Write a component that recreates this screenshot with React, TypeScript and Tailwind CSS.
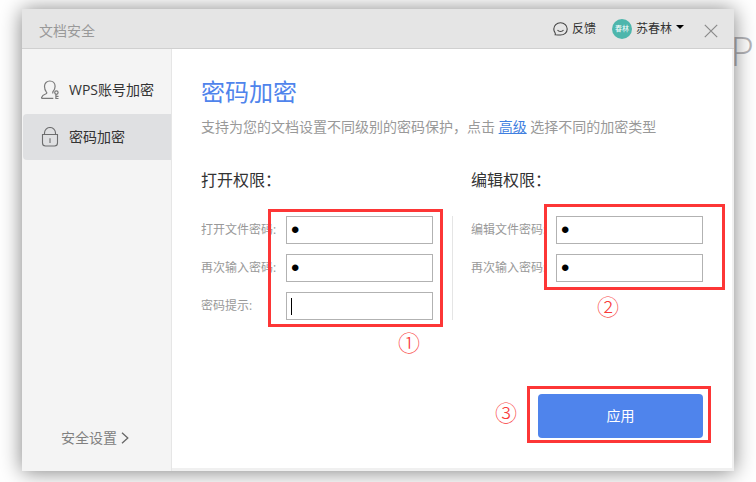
import React, { useState } from 'react';

type Field = {
  id: string;
  label: string;
  type: 'password' | 'text';
  initial: string;
  active?: boolean;
};

const openFields: Field[] = [
  { id: 'open-password', label: '打开文件密码:', type: 'password', initial: '1' },
  { id: 'open-repeat', label: '再次输入密码:', type: 'password', initial: '1' },
  { id: 'open-hint', label: '密码提示:', type: 'text', initial: '', active: true },
];

const editFields: Field[] = [
  { id: 'edit-password', label: '编辑文件密码:', type: 'password', initial: '1' },
  { id: 'edit-repeat', label: '再次输入密码:', type: 'password', initial: '1' },
];

function UserKeyIcon() {
  return (
    <svg width="18" height="20" viewBox="0 0 18 20" fill="none" stroke="#7a7a7a" strokeWidth="1.2">
      <path d="M12.300 18.400H1.500c-.7 0-1-.5-.8-1.100.5-1.900 1.800-2.700 3.900-3.300 1.300-.4 1.500-1.300.7-2.200C4.200 10.500 3.500 8.500 3.500 6.300 3.500 3.100 5.800 1 8.800 1s5.300 2.100 5.300 5.300c0 2-.7 3.600-1.800 4.900-.7.900-.7 1.500-.2 2.200" />
      <circle cx="15.400" cy="12.600" r="1.700" />
      <path d="M14.900 14.300v4.200h2.600M14.900 16.400h2.600" />
    </svg>
  );
}

function LockIcon() {
  return (
    <svg width="18" height="20" viewBox="0 0 18 20" fill="none" stroke="#6c6d6e" strokeWidth="1.1">
      <path d="M3.500 7.500V6a5.400 5.400 0 0 1 11 0v1.500" />
      <path d="M1.500 7.500h15v8.500a3 3 0 0 1-3 3h-9a3 3 0 0 1-3-3z" />
      <path d="M9 11.200v4.800" />
    </svg>
  );
}

function FeedbackIcon() {
  return (
    <svg width="15" height="14" viewBox="0 0 15 14" fill="none" stroke="#444" strokeWidth="1.1">
      <path d="M2.200 12.700c.3-.8.200-1.400-.2-2A5.900 5.900 0 0 1 .8 7C.8 3.500 3.700.8 7.500.8S14.200 3.500 14.200 7s-2.900 6-6.700 6c-1.800 0-3.400-.1-5.300-.3z" />
      <path d="M4.500 8c1.400 2 4.600 2 6 0" />
    </svg>
  );
}

function FieldRow({ field }: { field: Field }) {
  const [value, setValue] = useState(field.initial);

  return (
    <div className="flex items-center">
      <label htmlFor={field.id} className="w-[85px] shrink-0 text-xs text-[#999]">
        {field.label}
      </label>
      <div className="relative min-w-0 flex-1">
        <input
          id={field.id}
          type={field.type}
          value={value}
          onChange={(e) => setValue(e.target.value)}
          className="block h-7 w-full border border-[#b2b2b2] bg-white px-1 font-['Liberation_Sans'] text-2xl text-black outline-none"
        />
        {field.active && <span className="absolute top-1.5 left-[5px] h-[17px] w-px bg-black" />}
      </div>
    </div>
  );
}

function Mark({ className, children }: { className: string; children: string }) {
  return (
    <span className={`absolute text-[22px] leading-6 font-light text-[#f93a3a] ${className}`}>
      {children}
    </span>
  );
}

function App() {
  return (
    <div className="relative isolate flex min-h-screen overflow-hidden bg-white px-[22px] pt-[9px] pb-[11px] font-['Open_Sans','Noto_Sans_CJK_SC',sans-serif]">
      <p className="absolute top-[31px] right-0.5 -z-10 font-['Open_Sans'] text-[40px] leading-10 font-light text-[#b4b4b8]">
        P
      </p>

      <div className="flex min-w-0 flex-1 flex-col bg-white shadow-[0_1px_20px_rgba(0,0,0,0.5)]">
        <header className="flex h-10 items-center border-b border-[#d0d0d0] bg-[#e5e5e5] pr-4 pl-[17px]">
          <h1 className="mt-1 flex-1 text-sm text-[#999]">文档安全</h1>
          <button type="button" className="flex items-center gap-1 text-xs text-[#333]">
            <FeedbackIcon />
            反馈
          </button>
          <button type="button" className="ml-4 flex items-center gap-1 text-xs text-[#333]">
            <span className="flex size-5 items-center justify-center rounded-full bg-[#4db6ac] text-[7px] text-white">
              春林
            </span>
            苏春林
            <svg width="8" height="4" viewBox="0 0 8 4" className="mb-1">
              <path d="M0 0h8L4 4z" fill="#000" />
            </svg>
          </button>
          <button type="button" aria-label="关闭" className="mt-1 ml-5">
            <svg width="14" height="14" viewBox="0 0 14 14" stroke="#8a8a8a" strokeWidth="1.2">
              <path d="M.8.8l12.400 12.400M13.200.8L.8 13.200" />
            </svg>
          </button>
        </header>

        <div className="flex flex-1">
          <nav className="flex w-[150px] shrink-0 flex-col border-r border-[#e6e6e6] bg-[#f4f4f4] pt-[18px] pb-[21px] pl-px text-sm text-[#333]">
            <a href="#account" className="flex h-[46px] items-center gap-2.5 pl-[18px]">
              <UserKeyIcon />
              WPS账号加密
            </a>
            <a
              href="#password"
              className="mt-px flex h-[46px] items-center gap-2.5 rounded-l bg-[#dfe0e2] pl-[18px]"
            >
              <LockIcon />
              密码加密
            </a>
            <a href="#settings" className="mt-auto flex h-6 items-center gap-1 pl-[38px] text-[#808080]">
              安全设置
              <svg width="8" height="12" viewBox="0 0 8 12" fill="none" stroke="#666" strokeWidth="1.300">
                <path d="M1 .8L6.800 6 1 11.200" />
              </svg>
            </a>
          </nav>

          <main className="flex min-w-0 flex-1 flex-col border-r-2 border-b-3 border-[#f0f0f0] px-[29px] pt-[27px] pb-[30px]">
            <h2 className="text-2xl leading-8 text-[#4f84ec]">密码加密</h2>
            <p className="mt-[9px] text-sm text-[#999]">
              支持为您的文档设置不同级别的密码保护，点击{' '}
              <a href="#advanced" className="text-[#3f7fe0] underline">
                高级
              </a>{' '}
              选择不同的加密类型
            </p>

            <div className="mt-[31px] grid grid-cols-[1fr_38px_1fr]">
              <section>
                <h3 className="text-base text-[#333]">打开权限：</h3>
                <div className="relative mt-6 flex flex-col gap-2.5">
                  {openFields.map((field) => (
                    <FieldRow key={field.id} field={field} />
                  ))}
                  <div className="pointer-events-none absolute -top-[7px] -right-2.5 -bottom-[7px] left-[67px] border-3 border-[#fd3636]" />
                  <Mark className="right-[13px] -bottom-[34px]">①</Mark>
                </div>
              </section>
              <div className="mt-12 w-px justify-self-center bg-[#e5e5e5]" />
              <section>
                <h3 className="text-base text-[#333]">编辑权限：</h3>
                <div className="relative mt-6 flex flex-col gap-2.5">
                  {editFields.map((field) => (
                    <FieldRow key={field.id} field={field} />
                  ))}
                  <div className="pointer-events-none absolute -top-3 -right-[22px] -bottom-2 left-[73px] border-3 border-[#fd3636]" />
                  <Mark className="right-[84px] -bottom-9">②</Mark>
                </div>
              </section>
            </div>

            <div className="relative mt-auto self-end">
              <button
                type="button"
                className="block h-11 w-[165px] rounded bg-[#4f84ec] text-sm text-white"
              >
                应用
              </button>
              <div className="pointer-events-none absolute -top-2 -right-2 -bottom-[5px] -left-[11px] border-3 border-[#fd3636]" />
              <Mark className="top-1.5 -left-[43px]">③</Mark>
            </div>
          </main>
        </div>
      </div>
    </div>
  );
}

export default App;
